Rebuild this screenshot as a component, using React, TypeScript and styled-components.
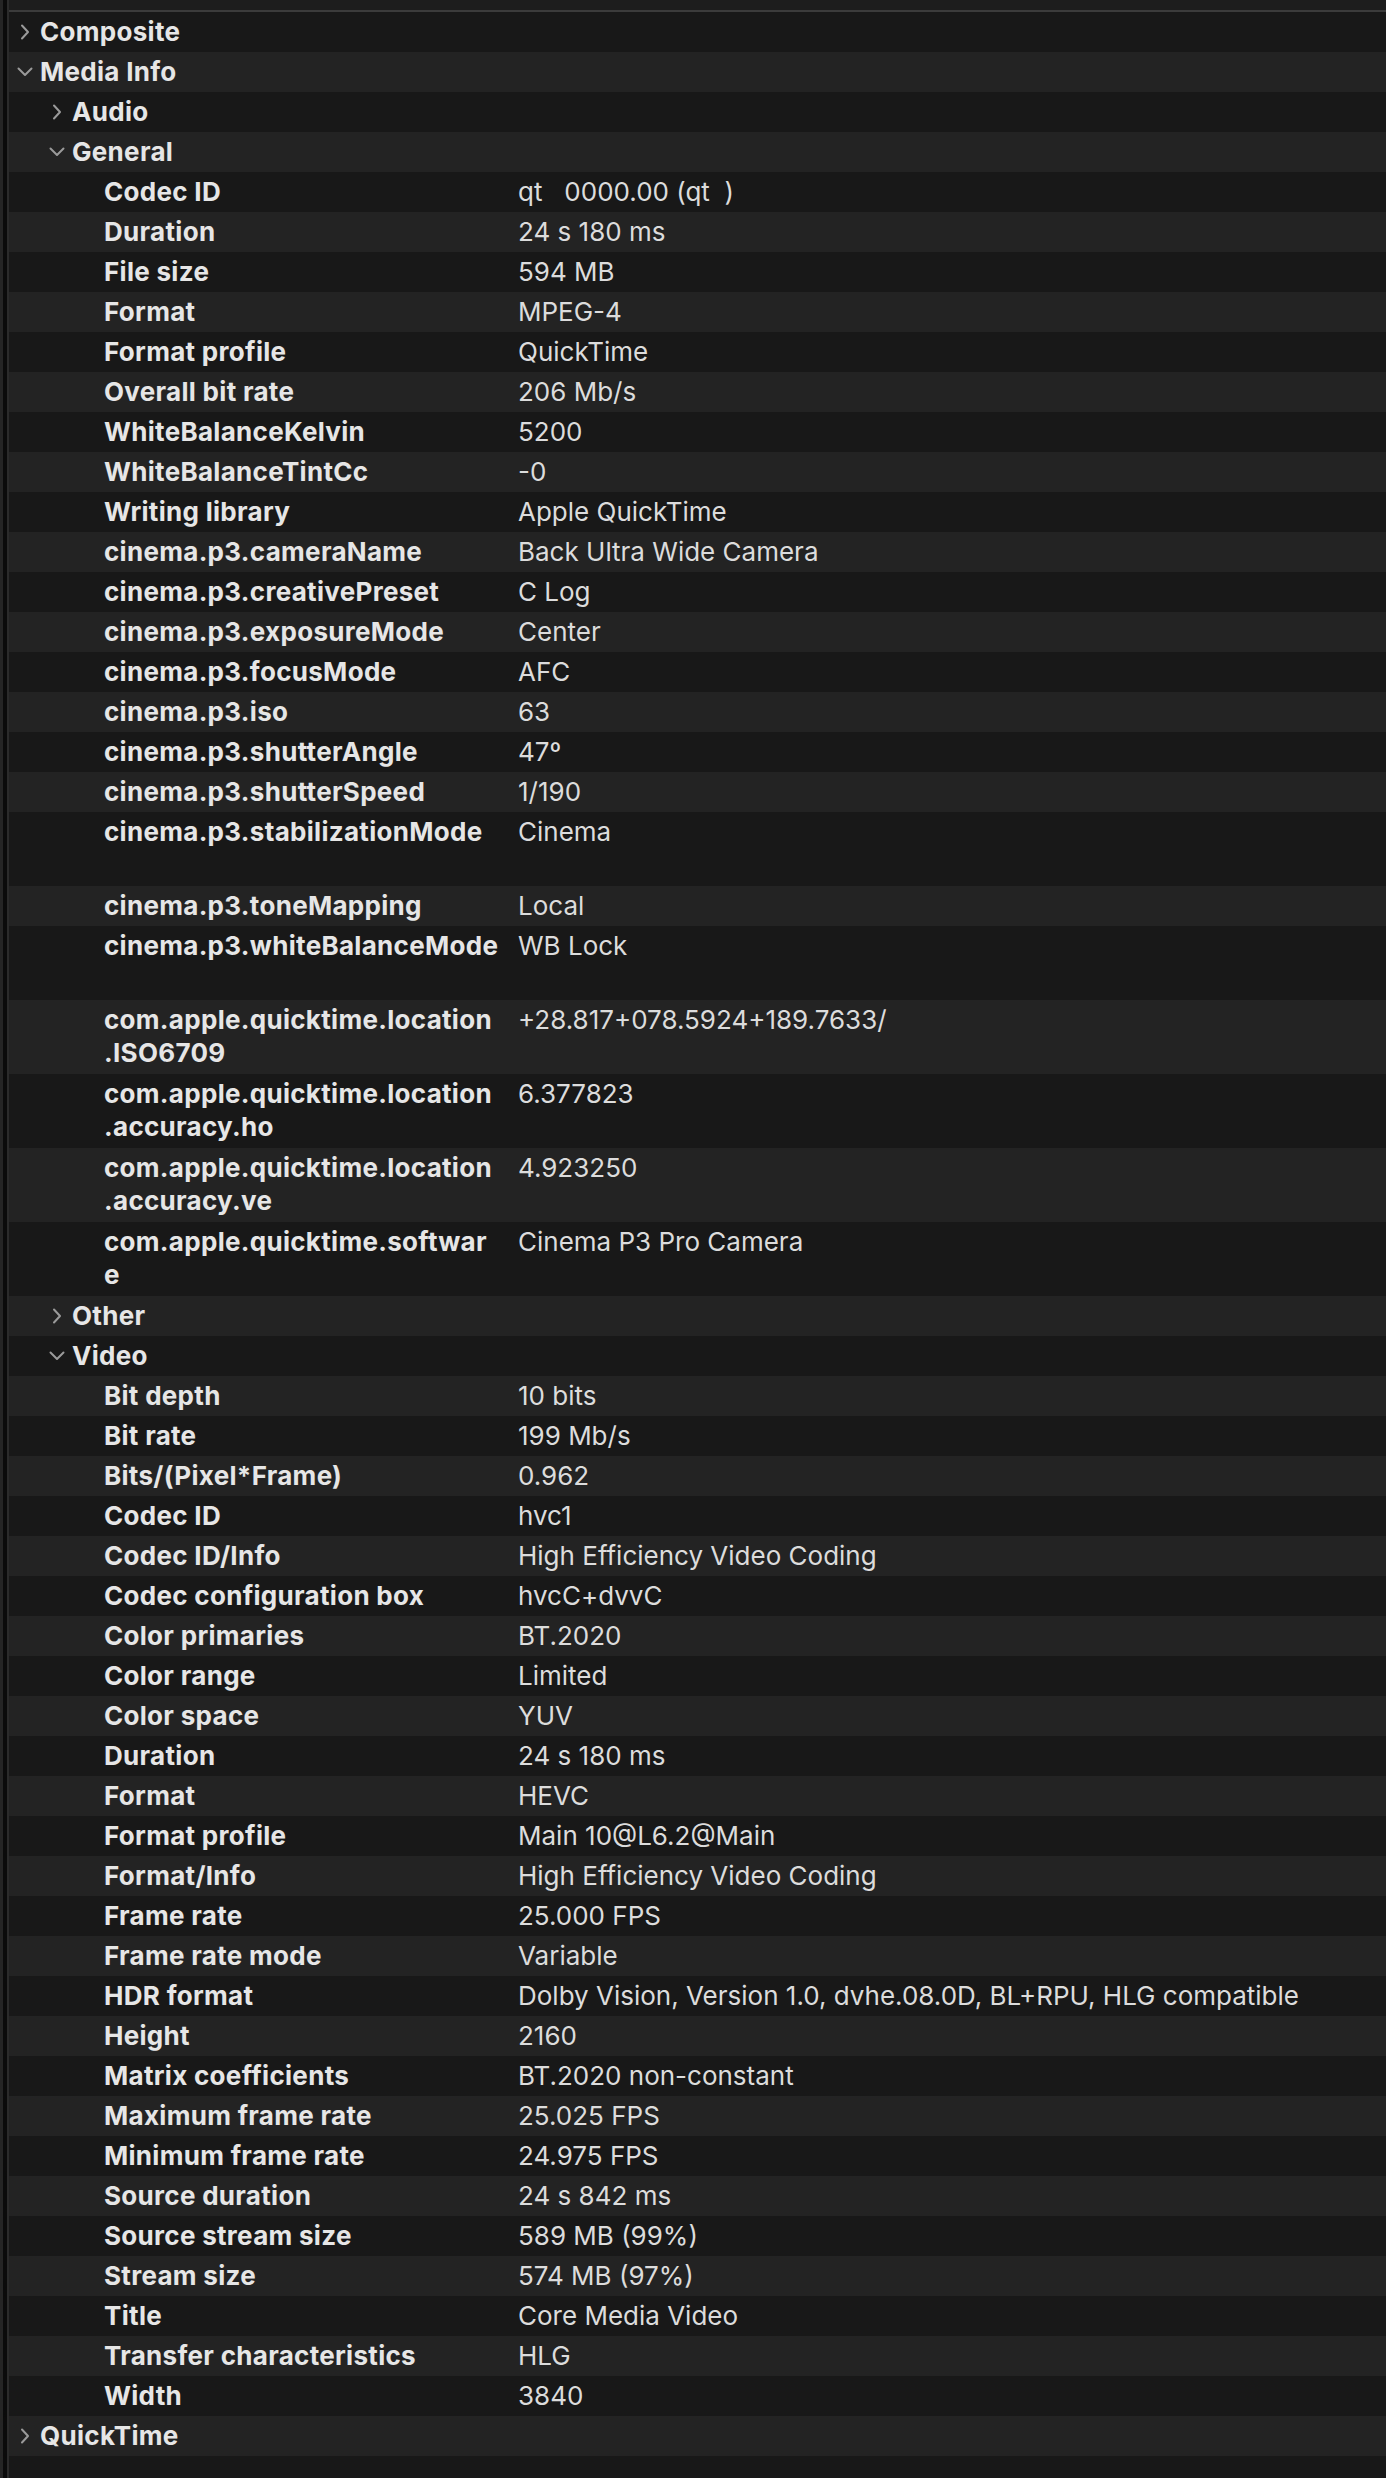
import React from "react";
import styled, { createGlobalStyle } from "styled-components";

const Global = createGlobalStyle`
  html, body { margin: 0; padding: 0; background: #181818; }
  body { font-family: Inter, "Noto Sans", "Liberation Sans", sans-serif; -webkit-font-smoothing: antialiased; }
`;

type Node =
  | { kind: "section"; label: string; level: number; open: boolean }
  | { kind: "kv"; key: string; value: string; tall?: boolean };

const general: [string, string, boolean?][] = [
  ["Codec ID", "qt   0000.00 (qt  )"],
  ["Duration", "24 s 180 ms"],
  ["File size", "594 MB"],
  ["Format", "MPEG-4"],
  ["Format profile", "QuickTime"],
  ["Overall bit rate", "206 Mb/s"],
  ["WhiteBalanceKelvin", "5200"],
  ["WhiteBalanceTintCc", "-0"],
  ["Writing library", "Apple QuickTime"],
  ["cinema.p3.cameraName", "Back Ultra Wide Camera"],
  ["cinema.p3.creativePreset", "C Log"],
  ["cinema.p3.exposureMode", "Center"],
  ["cinema.p3.focusMode", "AFC"],
  ["cinema.p3.iso", "63"],
  ["cinema.p3.shutterAngle", "47º"],
  ["cinema.p3.shutterSpeed", "1/190"],
  ["cinema.p3.stabilizationMode", "Cinema", true],
  ["cinema.p3.toneMapping", "Local"],
  ["cinema.p3.whiteBalanceMode", "WB Lock", true],
  ["com.apple.quicktime.location\n.ISO6709", "+28.817+078.5924+189.7633/", true],
  ["com.apple.quicktime.location\n.accuracy.ho", "6.377823", true],
  ["com.apple.quicktime.location\n.accuracy.ve", "4.923250", true],
  ["com.apple.quicktime.softwar\ne", "Cinema P3 Pro Camera", true],
];

const video: [string, string][] = [
  ["Bit depth", "10 bits"],
  ["Bit rate", "199 Mb/s"],
  ["Bits/(Pixel*Frame)", "0.962"],
  ["Codec ID", "hvc1"],
  ["Codec ID/Info", "High Efficiency Video Coding"],
  ["Codec configuration box", "hvcC+dvvC"],
  ["Color primaries", "BT.2020"],
  ["Color range", "Limited"],
  ["Color space", "YUV"],
  ["Duration", "24 s 180 ms"],
  ["Format", "HEVC"],
  ["Format profile", "Main 10@L6.2@Main"],
  ["Format/Info", "High Efficiency Video Coding"],
  ["Frame rate", "25.000 FPS"],
  ["Frame rate mode", "Variable"],
  ["HDR format", "Dolby Vision, Version 1.0, dvhe.08.0D, BL+RPU, HLG compatible"],
  ["Height", "2160"],
  ["Matrix coefficients", "BT.2020 non-constant"],
  ["Maximum frame rate", "25.025 FPS"],
  ["Minimum frame rate", "24.975 FPS"],
  ["Source duration", "24 s 842 ms"],
  ["Source stream size", "589 MB (99%)"],
  ["Stream size", "574 MB (97%)"],
  ["Title", "Core Media Video"],
  ["Transfer characteristics", "HLG"],
  ["Width", "3840"],
];

const nodes: Node[] = [
  { kind: "section", label: "Composite", level: 0, open: false },
  { kind: "section", label: "Media Info", level: 0, open: true },
  { kind: "section", label: "Audio", level: 1, open: false },
  { kind: "section", label: "General", level: 1, open: true },
  ...general.map(([key, value, tall]) => ({ kind: "kv" as const, key, value, tall })),
  { kind: "section", label: "Other", level: 1, open: false },
  { kind: "section", label: "Video", level: 1, open: true },
  ...video.map(([key, value]) => ({ kind: "kv" as const, key, value })),
  { kind: "section", label: "QuickTime", level: 0, open: false },
];

const Page = styled.div`
  display: flex;
  min-height: 2478px;
  background: #181818;
`;

const LeftEdge = styled.div`
  flex: 0 0 9px;
  background: linear-gradient(
    to right,
    #252525 0 3px,
    #0b0b0b 3px 7px,
    #2b2b2b 7px 9px
  );
`;

const Main = styled.div`
  flex: 1;
  display: flex;
  flex-direction: column;
  min-width: 0;
`;

const Header = styled.div`
  height: 10px;
  background: #1d1d1d;
  border-bottom: 2px solid #3b3b3b;
`;

const List = styled.div`
  display: flex;
  flex-direction: column;
`;

const Row = styled.div<{ $odd: boolean; $tall?: boolean }>`
  display: flex;
  align-items: flex-start;
  box-sizing: border-box;
  min-height: ${(p) => (p.$tall ? 74 : 40)}px;
  padding: 3px 0 4px;
  background: ${(p) => (p.$odd ? "#232323" : "#181818")};
  font-size: 26px;
  line-height: 33px;
`;

const SectionLabel = styled.div<{ $level: number }>`
  display: flex;
  align-items: center;
  gap: 7px;
  padding-left: ${(p) => 8 + p.$level * 32}px;
  color: #e6e6e6;
  font-weight: 700;
  letter-spacing: 0.3px;
`;

const ChevronBox = styled.span`
  display: flex;
  align-items: center;
  justify-content: center;
  width: 16px;
  height: 33px;
`;

const Key = styled.div`
  flex: 0 0 509px;
  box-sizing: border-box;
  padding-left: 95px;
  padding-right: 8px;
  color: #e6e6e6;
  font-weight: 700;
  letter-spacing: 0.3px;
  white-space: pre;
`;

const Value = styled.div`
  flex: 1;
  color: #dcdcdc;
  font-weight: 400;
  white-space: pre;
`;

const Chevron: React.FC<{ open: boolean }> = ({ open }) => (
  <ChevronBox>
    {open ? (
      <svg width="16" height="10" viewBox="0 0 16 10">
        <polyline points="1.5,1.5 8,8 14.5,1.5" fill="none" stroke="#9a9a9a" strokeWidth="2" strokeLinecap="round" strokeLinejoin="round" />
      </svg>
    ) : (
      <svg width="10" height="16" viewBox="0 0 10 16">
        <polyline points="2,1.5 8,8 2,14.5" fill="none" stroke="#9a9a9a" strokeWidth="2" strokeLinecap="round" strokeLinejoin="round" />
      </svg>
    )}
  </ChevronBox>
);

export default function App() {
  return (
    <>
      <Global />
      <Page>
        <LeftEdge />
        <Main>
          <Header />
          <List>
            {nodes.map((n, i) =>
              n.kind === "section" ? (
                <Row key={i} $odd={i % 2 === 1}>
                  <SectionLabel $level={n.level}>
                    <Chevron open={n.open} />
                    <span>{n.label}</span>
                  </SectionLabel>
                </Row>
              ) : (
                <Row key={i} $odd={i % 2 === 1} $tall={n.tall}>
                  <Key>{n.key}</Key>
                  <Value>{n.value}</Value>
                </Row>
              )
            )}
          </List>
        </Main>
      </Page>
    </>
  );
}
